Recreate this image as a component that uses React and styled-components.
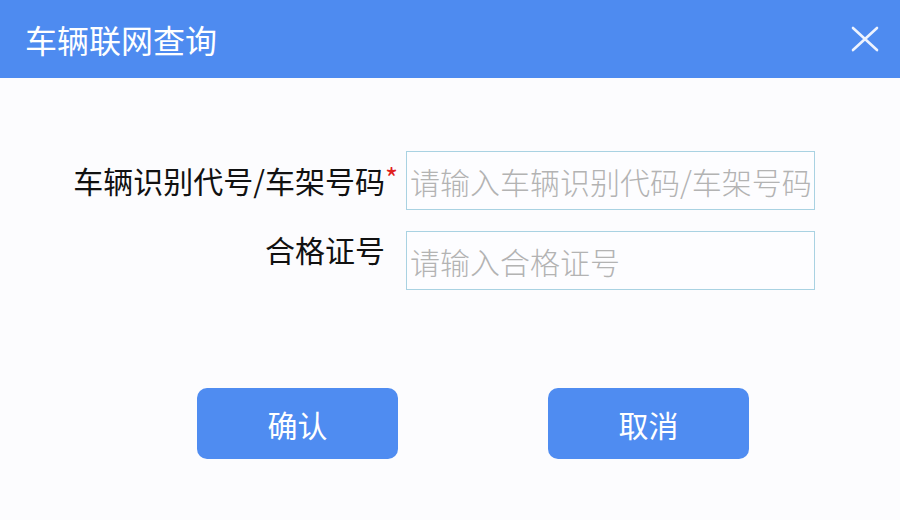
import React from "react";
import styled, { createGlobalStyle } from "styled-components";

const GlobalStyle = createGlobalStyle`
  html, body {
    margin: 0;
    padding: 0;
    background: #fcfcfe;
  }
  body {
    font-family: "Noto Sans CJK SC", "Noto Sans", sans-serif;
  }
`;

const Dialog = styled.div`
  width: 900px;
  height: 520px;
  background: #fcfcfe;
  display: flex;
  flex-direction: column;
  overflow: hidden;
`;

const Header = styled.div`
  height: 78px;
  background: #4e8bf0;
  display: flex;
  align-items: center;
  justify-content: space-between;
  padding: 0 20px 0 25px;
  box-sizing: border-box;
`;

const Title = styled.h1`
  margin: 0;
  font-size: 32px;
  font-weight: 400;
  color: #ffffff;
  line-height: 1;
`;

const CloseButton = styled.button`
  border: none;
  background: none;
  padding: 0;
  width: 30px;
  height: 30px;
  display: flex;
  align-items: center;
  justify-content: center;
  cursor: pointer;
`;

const Form = styled.div`
  display: grid;
  grid-template-columns: 398px 409px;
  column-gap: 8px;
  row-gap: 21px;
  margin-top: 73px;
`;

const Label = styled.label`
  display: flex;
  justify-content: flex-end;
  align-items: flex-start;
  padding-top: ${(p) => p.$offset}px;
  font-size: 30px;
  line-height: 30px;
  color: #111;
`;

const Star = styled.span`
  width: 13px;
  font-size: 28px;
  line-height: 24px;
  color: #e02020;
  text-align: right;
`;

const Input = styled.input`
  height: 59px;
  box-sizing: border-box;
  border: 1px solid #a9d2e2;
  background: #fdfdff;
  padding: 0 3px;
  font-family: inherit;
  font-size: 30px;
  font-weight: 300;
  color: #333;
  outline: none;

  &::placeholder {
    color: #b3b3b3;
  }
`;

const Actions = styled.div`
  display: flex;
  gap: 150px;
  padding-left: 197px;
  margin-top: 98px;
`;

const ActionButton = styled.button`
  width: 201px;
  height: 71px;
  border: none;
  border-radius: 10px;
  background: #4f8cf1;
  color: #ffffff;
  font-family: inherit;
  font-size: 30px;
  cursor: pointer;
`;

const fields = [
  { label: "车辆识别代号/车架号码", required: true, offset: 14, placeholder: "请输入车辆识别代码/车架号码" },
  { label: "合格证号", required: false, offset: 3, placeholder: "请输入合格证号" },
];

export default function App() {
  return (
    <>
      <GlobalStyle />
      <Dialog>
        <Header>
          <Title>车辆联网查询</Title>
          <CloseButton aria-label="关闭">
            <svg width="30" height="26" viewBox="0 0 30 26">
              <path
                d="M3 2 L27 24 M27 2 L3 24"
                stroke="#eef3fe"
                strokeWidth="2.6"
                strokeLinecap="round"
              />
            </svg>
          </CloseButton>
        </Header>
        <Form>
          {fields.map((f) => (
            <React.Fragment key={f.label}>
              <Label $offset={f.offset}>
                {f.label}
                <Star>{f.required ? "*" : ""}</Star>
              </Label>
              <Input placeholder={f.placeholder} />
            </React.Fragment>
          ))}
        </Form>
        <Actions>
          <ActionButton>确认</ActionButton>
          <ActionButton>取消</ActionButton>
        </Actions>
      </Dialog>
    </>
  );
}
